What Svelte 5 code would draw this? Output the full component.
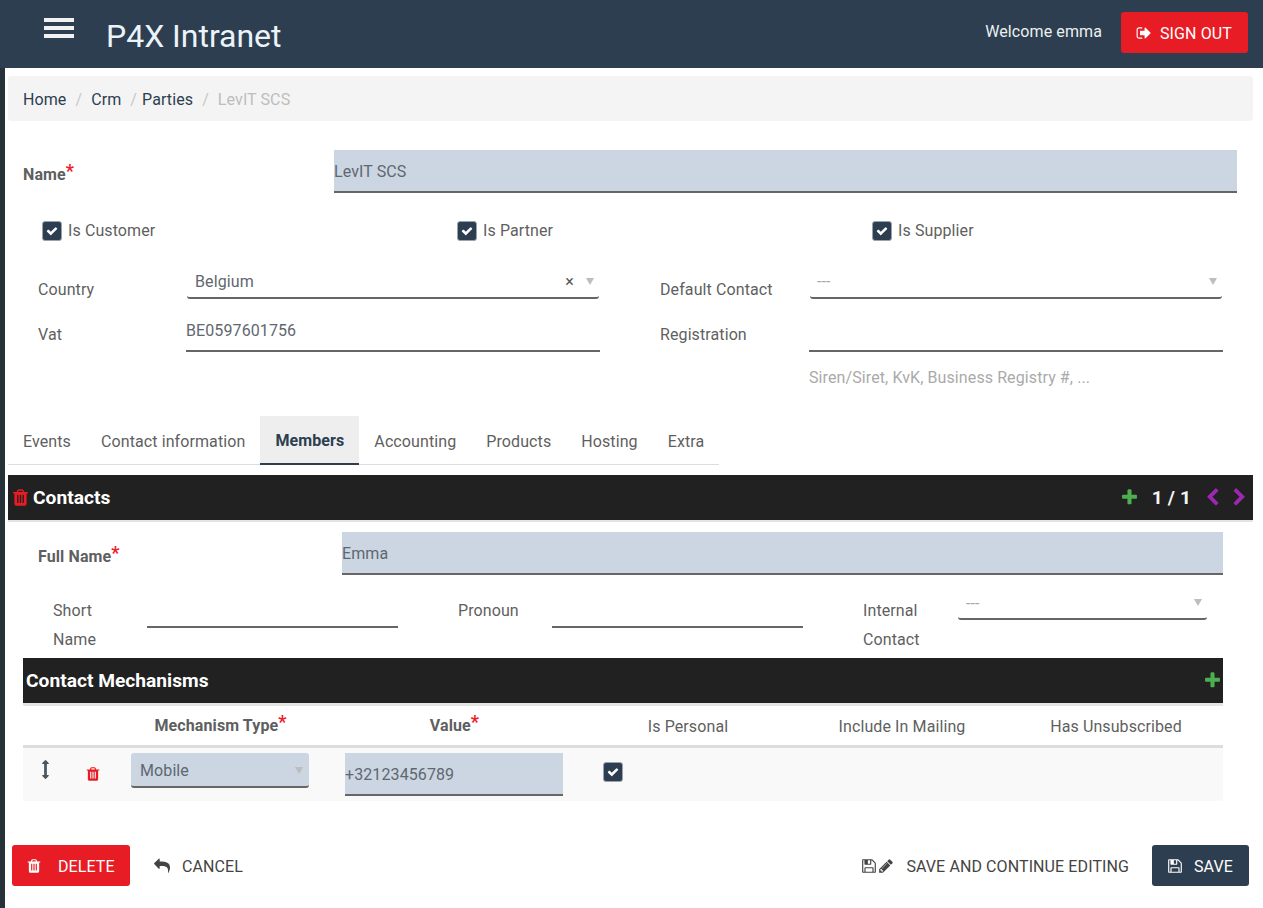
<script>
  const paths = {
    trash: "M704 1376v-704q0-14-9-23t-23-9h-64q-14 0-23 9t-9 23v704q0 14 9 23t23 9h64q14 0 23-9t9-23zm256 0v-704q0-14-9-23t-23-9h-64q-14 0-23 9t-9 23v704q0 14 9 23t23 9h64q14 0 23-9t9-23zm256 0v-704q0-14-9-23t-23-9h-64q-14 0-23 9t-9 23v704q0 14 9 23t23 9h64q14 0 23-9t9-23zm-544-992h448l-48-117q-7-9-17-11h-317q-10 2-17 11zm928 32v64q0 14-9 23t-23 9h-96v948q0 83-47 143.5t-113 60.5h-832q-66 0-113-58.5t-47-141.5v-952h-96q-14 0-23-9t-9-23v-64q0-14 9-23t23-9h309l70-167q15-37 54-63t79-26h320q40 0 79 26t54 63l70 167h309q14 0 23 9t9 23z",
    signout: "M704 1440q0 4 1 20t.5 26.5-3 23.5-10 19.5-20.5 6.5h-320q-119 0-203.5-84.5t-84.5-203.5v-704q0-119 84.5-203.5t203.5-84.5h320q13 0 22.5 9.5t9.5 22.5q0 4 1 20t.5 26.5-3 23.5-10 19.5-20.5 6.5h-320q-66 0-113 47t-47 113v704q0 66 47 113t113 47h312l11.500 1 11.500 3 8 5.500 7 9 2 13.500zm928-544q0 26-19 45l-544 544q-19 19-45 19t-45-19-19-45v-288h-448q-26 0-45-19t-19-45v-384q0-26 19-45t45-19h448v-288q0-26 19-45t45-19 45 19l544 544q19 19 19 45z",
    plus: "M1600 736v192q0 40-28 68t-68 28h-416v416q0 40-28 68t-68 28h-192q-40 0-68-28t-28-68v-416h-416q-40 0-68-28t-28-68v-192q0-40 28-68t68-28h416v-416q0-40 28-68t68-28h192q40 0 68 28t28 68v416h416q40 0 68 28t28 68z",
    left: "M1427 301l-531 531 531 531q19 19 19 45t-19 45l-166 166q-19 19-45 19t-45-19l-742-742q-19-19-19-45t19-45l742-742q19-19 45-19t45 19l166 166q19 19 19 45t-19 45z",
    right: "M1363 877l-742 742q-19 19-45 19t-45-19l-166-166q-19-19-19-45t19-45l531-531-531-531q-19-19-19-45t19-45l166-166q19-19 45-19t45 19l742 742q19 19 19 45t-19 45z",
    arrowsv: "M1216 320q0 26-19 45t-45 19h-128v1024h128q26 0 45 19t19 45-19 45l-256 256q-19 19-45 19t-45-19l-256-256q-19-19-19-45t19-45 45-19h128v-1024h-128q-26 0-45-19t-19-45 19-45l256-256q19-19 45-19t45 19l256 256q19 19 19 45z",
    reply: "M1792 1120q0 166-127 451-3 7-10.500 24t-13.500 30-13 22q-12 17-28 17-15 0-23.500-10t-8.500-25q0-9 2.500-26.500t2.500-23.500q5-68 5-123 0-101-17.500-181t-48.500-138.500-80-101-105.500-69.500-133-42.500-154-21.500-175.500-6h-224v256q0 26-19 45t-45 19-45-19l-512-512q-19-19-19-45t19-45l512-512q19-19 45-19t45 19 19 45v256h224q713 0 875 403 53 134 53 333z",
    floppy: "M512 1536h768v-384h-768v384zm896 0h128v-896q0-14-10-38.500t-20-34.500l-281-281q-10-10-34-20t-39-10v416q0 40-28 68t-68 28h-576q-40 0-68-28t-28-68v-416h-128v1280h128v-416q0-40 28-68t68-28h832q40 0 68 28t28 68v416zm-384-928v-320q0-13-9.500-22.500t-22.500-9.500h-192q-13 0-22.500 9.500t-9.500 22.500v320q0 13 9.500 22.500t22.500 9.500h192q13 0 22.500-9.500t9.500-22.500zm640 32v928q0 40-28 68t-68 28h-1344q-40 0-68-28t-28-68v-1344q0-40 28-68t68-28h928q40 0 88 20t76 48l280 280q28 28 48 76t20 88z",
    pencil: "M491 1536l91-91-235-235-91 91v107h128v128h107zm523-928q0-22-22-22-10 0-17 7l-542 542q-7 7-7 17 0 22 22 22 10 0 17-7l542-542q7-7 7-17zm-54-192l416 416-832 832h-416v-416zm683 96q0 53-37 90l-166 166-416-416 166-165q36-38 90-38 53 0 91 38l235 234q37 39 37 91z",
    check: "M1671 566q0 40-28 68l-724 724-136 136q-28 28-68 28t-68-28l-136-136-362-362q-28-28-28-68t28-68l136-136q28-28 68-28t68 28l294 295 656-657q28-28 68-28t68 28l136 136q28 28 28 68z"
  };
  const tabs = ["Events", "Contact information", "Members", "Accounting", "Products", "Hosting", "Extra"];
</script>

{#snippet icon(name, cls)}
  <svg class="icon {cls}" viewBox="0 0 1792 1792" aria-hidden="true"><path d={paths[name]} fill="currentColor" /></svg>
{/snippet}

{#snippet checkbox(label)}
  <label class="check">
    <span class="box">{@render icon("check", "i-check")}</span>
    {#if label}<span class="check-text">{label}</span>{/if}
  </label>
{/snippet}

<div class="page">
  <header class="topbar">
    <div class="burger"><span></span><span></span><span></span></div>
    <div class="brand">P4X Intranet</div>
    <div class="welcome">Welcome emma</div>
    <button class="btn red signout">{@render icon("signout", "i-16")}<span>Sign out</span></button>
  </header>

  <main class="main">
    <nav class="crumbs">
      <a href="#home">Home</a><i>/</i><a href="#crm">Crm</a><i class="tight">/</i><a href="#parties">Parties</a><i>/</i><span>LevIT SCS</span>
    </nav>

    <div class="name-row">
      <div class="req-label">Name<b>*</b></div>
      <div class="filled">LevIT SCS</div>
    </div>

    <div class="checks">
      {@render checkbox("Is Customer")}
      {@render checkbox("Is Partner")}
      {@render checkbox("Is Supplier")}
    </div>

    <div class="party-grid">
      <div class="lbl">Country</div>
      <div class="select sel-a"><span>Belgium</span><em>×</em><u></u></div>
      <div class="lbl second">Default Contact</div>
      <div class="select sel-b"><span class="muted">---</span><u></u></div>

      <div class="lbl">Vat</div>
      <div class="line">BE0597601756</div>
      <div class="lbl second">Registration</div>
      <div class="line"></div>

      <div class="hint">Siren/Siret, KvK, Business Registry #, ...</div>
    </div>

    <div class="tabs">
      {#each tabs as t}
        <div class="tab" class:active={t === "Members"}>{t}</div>
      {/each}
    </div>

    <section class="bar contacts-bar">
      <div class="bar-title">{@render icon("trash", "i-19 red-c")}<span>Contacts</span></div>
      <div class="pager">
        {@render icon("plus", "i-19 green")}
        <span class="count">1 / 1</span>
        {@render icon("left", "i-19 purple")}
        {@render icon("right", "i-19 purple")}
      </div>
    </section>

    <div class="member">
      <div class="fullname">
        <div class="req-label">Full Name<b>*</b></div>
        <div class="filled">Emma</div>
      </div>

      <div class="three">
        <div class="lbl narrow">Short Name</div>
        <div class="line thin"></div>
        <div class="lbl narrow">Pronoun</div>
        <div class="line thin"></div>
        <div class="lbl narrow">Internal Contact</div>
        <div class="select sel-c"><span class="muted">---</span><u></u></div>
      </div>

      <section class="bar mech-bar">
        <div class="bar-title"><span>Contact Mechanisms</span></div>
        {@render icon("plus", "i-19 green")}
      </section>

      <div class="table">
        <div class="thead">
          <div></div><div></div>
          <div class="th strong">Mechanism Type<b>*</b></div>
          <div class="th strong value-th">Value<b>*</b></div>
          <div class="th">Is Personal</div>
          <div class="th">Include In Mailing</div>
          <div class="th">Has Unsubscribed</div>
        </div>
        <div class="trow">
          <div class="c-drag">{@render icon("arrowsv", "i-19")}</div>
          <div class="c-del">{@render icon("trash", "i-16 red-c")}</div>
          <div class="c-type"><div class="mini-select"><span>Mobile</span><u></u></div></div>
          <div class="c-val"><div class="filled val">+32123456789</div></div>
          <div class="c-check">{@render checkbox("")}</div>
        </div>
      </div>
    </div>

    <footer class="actions">
      <button class="btn red del">{@render icon("trash", "i-16")}<span>Delete</span></button>
      <button class="btn flat cancel">{@render icon("reply", "i-16")}<span>Cancel</span></button>
      <div class="spacer"></div>
      <button class="btn flat cont">{@render icon("floppy", "i-16")}{@render icon("pencil", "i-16")}<span>Save and continue editing</span></button>
      <button class="btn navy save">{@render icon("floppy", "i-16")}<span>Save</span></button>
    </footer>
  </main>
</div>

<style>
  :global(body) { margin: 0; background: #fff; font-family: Roboto, "Liberation Sans", sans-serif; font-size: 16px; letter-spacing: 0.1px; color: #5f5f5f; }
  .page { width: 1263px; height: 908px; overflow: hidden; background: #263238; }
  .icon { display: block; flex: none; }
  .i-16 { width: 16px; height: 16px; }
  .i-19 { width: 19px; height: 19px; }
  .i-check { width: 12px; height: 12px; }
  .red-c { color: #e81c24; }
  .green { color: #4caf50; }
  .purple { color: #9c27b0; }

  .topbar { height: 68px; background: #2d3e50; display: flex; align-items: flex-start; color: #fff; }
  .burger { margin: 18px 0 0 44px; width: 30px; display: flex; flex-direction: column; gap: 4px; }
  .burger span { height: 4px; background: #f2f2f2; }
  .brand { margin: 17px 0 0 32px; font-size: 32px; line-height: 38px; letter-spacing: -0.02px; color: #ecf3f8; }
  .welcome { margin: 22px 19px 0 auto; line-height: 19px; color: #ecf0f1; }

  .btn { display: flex; align-items: center; border: 0; height: 41px; border-radius: 3px; font: inherit; letter-spacing: inherit; text-transform: uppercase; background: none; color: #444; padding: 1px 0 0; }
  .red { background: #e81c24; color: #fff; }
  .navy { background: #2d3e50; color: #fff; }
  .signout { margin: 12px 15px 0 0; width: 127px; padding-left: 15px; gap: 8px; }

  .main { margin-left: 5px; height: 840px; background: #fff; padding: 8px 10px 0 3px; box-sizing: border-box; }
  .crumbs { height: 45px; padding-top: 1px; box-sizing: border-box; background: #f4f4f4; border-radius: 3px; padding-left: 15px; display: flex; align-items: center; color: #bdbdbd; }
  .crumbs a { color: #2d3e50; text-decoration: none; }
  .crumbs i { font-style: normal; color: #c8c8c8; margin: 0 9px; }
  .crumbs i.tight { margin: 0 5px 0 9px; }

  .name-row { margin-top: 29px; display: grid; grid-template-columns: 311px 903px; padding-left: 15px; align-items: center; }
  .req-label { font-weight: 700; color: #5f5f5f; padding-top: 5px; }
  .req-label b, .th b { color: #ef1c2a; font-weight: 700; font-size: 18px; position: relative; top: -3px; line-height: 1; }
  .filled { height: 41px; line-height: 43px; background: #cbd6e2; border-bottom: 2px solid #666; color: #5f6770; }

  .checks { margin-top: 27px; padding-left: 34px; display: grid; grid-template-columns: repeat(3, 415px); }
  .check { display: flex; align-items: center; gap: 6px; height: 22px; }
  .check-text { position: relative; top: -1px; }
  .box { width: 18px; height: 18px; border: 1px solid #9aa3ad; background: #2d3e50; border-radius: 3px; display: flex; align-items: center; justify-content: center; color: #fff; }

  .party-grid { margin-top: 17px; padding-left: 30px; display: grid; grid-template-columns: 148px 414px 209px 414px; grid-template-rows: 45px 45px auto; align-items: start; }
  .lbl { line-height: 20px; margin-top: 21px; color: #5f5f5f; }
  .second { padding-left: 60px; }
  .select { display: flex; align-items: center; height: 31px; border-bottom: 2px solid #666; border-radius: 3px; color: #5f6770; }
  .sel-a { margin: 7px 1px 0; padding: 0 5px 0 8px; }
  .sel-b { margin: 7px 1px 0; padding: 0 5px 0 7px; }
  .select span { flex: 1; }
  .select em { font-style: normal; font-size: 16px; color: #555; margin-right: 12px; }
  .select u, .mini-select u { width: 0; height: 0; border-left: 4px solid transparent; border-right: 4px solid transparent; border-top: 7px solid #bdbdbd; }
  .muted { color: #a8a8a8; }
  .line { height: 33px; line-height: 28px; margin-top: 13px; border-bottom: 2px solid #666; color: #5f6770; }
  .hint { grid-column: 4; margin-top: 17px; line-height: 24px; color: #aaa; }

  .tabs { margin-top: 26px; width: 711px; height: 49px; display: flex; border-bottom: 1px solid #ddd; box-sizing: border-box; }
  .tab { padding: 0 15px; line-height: 52px; color: #5f5f5f; height: 49px; box-sizing: border-box; white-space: nowrap; }
  .tab.active { background: #eee; color: #2d3e50; font-weight: 700; border-bottom: 2px solid #2d3e50; line-height: 50px; }

  .bar { height: 45px; background: #212121; display: flex; align-items: center; justify-content: space-between; color: #fff; }
  .contacts-bar { margin-top: 10px; border-bottom: 2px solid #e4e4e4; padding: 0 4px 0 3px; }
  .bar-title { display: flex; align-items: center; gap: 3px; font-size: 19.2px; font-weight: 700; letter-spacing: 0; }
  .pager { display: flex; align-items: center; gap: 8px; }
  .count { font-weight: 700; font-size: 19.2px; margin: 0 4px 0 5px; color: #f5f5f5; }

  .member { padding: 0 30px 0 15px; }
  .fullname { margin: 10px 0 0 15px; display: grid; grid-template-columns: 304px 881px; align-items: center; }
  .three { margin-top: 21px; padding-left: 30px; display: grid; grid-template-columns: 94px 251px 60px 94px 251px 60px 95px 249px; height: 62px; align-items: start; }
  .narrow { line-height: 29px; margin-top: 0; width: 70px; }
  .thin { height: 30px; margin-top: 0; }
  .three > :nth-child(3) { grid-column: 4; }
  .three > :nth-child(4) { grid-column: 5; }
  .three > :nth-child(5) { grid-column: 7; }
  .three > :nth-child(6) { grid-column: 8; }
  .sel-c { height: 22px; margin-top: 0; padding: 0 5px 0 8px; }
  .sel-c span { position: relative; top: -4px; }
  .sel-c u { margin-top: -9px; }
  .mech-bar { border-bottom: 3px solid #e4e4e4; padding: 0 1px 0 3px; }

  .table { width: 1200px; }
  .thead, .trow { display: grid; grid-template-columns: 44px 53px 201px 260px 214px 214px 214px; }
  .thead { height: 39px; border-bottom: 3px solid #ddd; align-items: center; }
  .th { text-align: center; line-height: 20px; padding-top: 2px; }
  .strong { font-weight: 700; padding-top: 0; }
  .value-th { padding-left: 7px; }
  .trow { height: 53px; background: #f9f9f9; }
  .c-drag { padding: 12px 0 0 13px; color: #4a5560; }
  .c-del { padding: 18px 0 0 18px; }
  .c-type { padding: 5px 0 0 11px; }
  .mini-select { padding: 2px 6px 0 9px; box-sizing: border-box; height: 35px; background: #cbd6e2; border-bottom: 2px solid #666; border-radius: 3px; display: flex; align-items: center; justify-content: space-between; width: 178px; color: #5f6770; }
  .c-val { padding: 5px 0 0 24px; }
  .val { width: 218px; }
  .c-check { padding: 13px 0 0 22px; }

  .actions { margin-top: 44px; margin-left: -3px; margin-right: 4px; padding-left: 7px; display: flex; align-items: center; }
  .del { width: 118px; padding-left: 14px; gap: 16px; box-sizing: border-box; }
  .cancel { margin-left: 24px; gap: 12px; }
  .spacer { flex: 1; }
  .cont { gap: 1px; margin-right: 23px; }
  .cont span { margin-left: 11px; }
  .save { width: 97px; padding-left: 15px; gap: 11px; box-sizing: border-box; }
</style>
